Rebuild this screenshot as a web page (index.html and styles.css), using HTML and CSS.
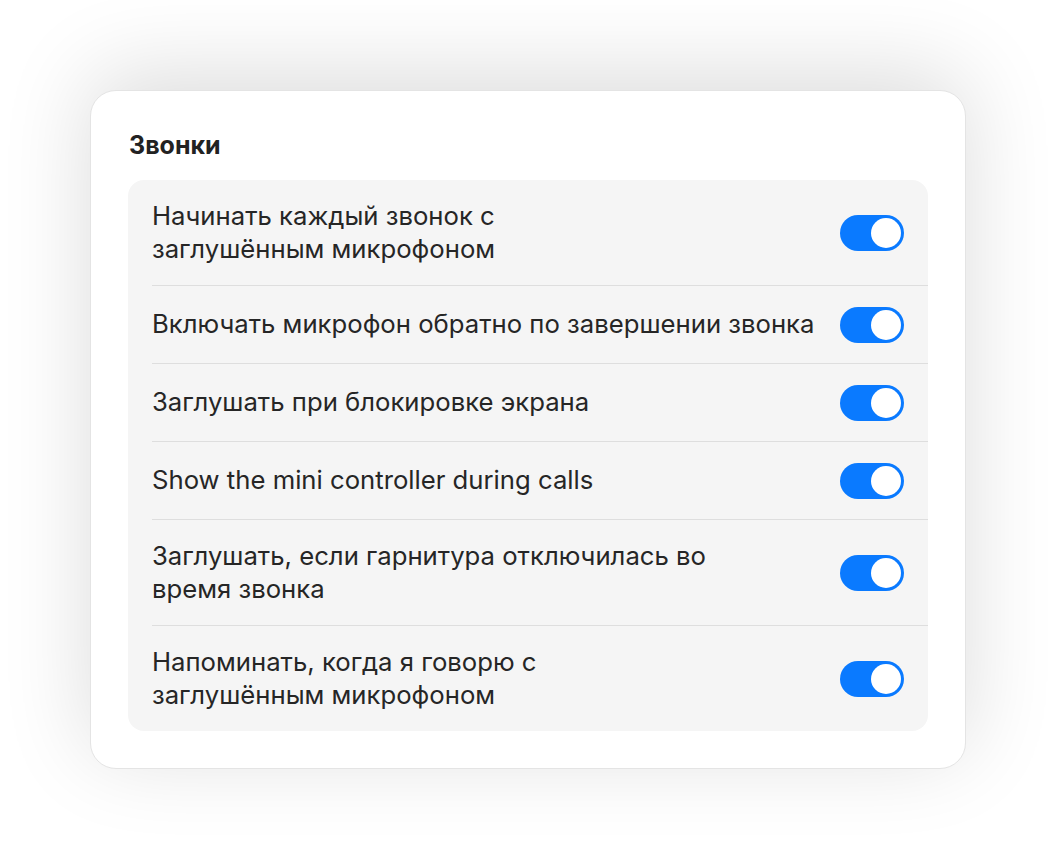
FILE: index.html
```html
<!DOCTYPE html>
<html lang="ru">
<head>
<meta charset="utf-8">
<title>Звонки</title>
<link rel="stylesheet" href="styles.css">
</head>
<body>
<div class="stage">
  <section class="card">
    <h2 class="title">Звонки</h2>
    <div class="list">
      <div class="row">
        <span class="label">Начинать каждый звонок с<br>заглушённым микрофоном</span>
        <span class="toggle"><span class="knob"></span></span>
      </div>
      <div class="row">
        <span class="label">Включать микрофон обратно по завершении звонка</span>
        <span class="toggle"><span class="knob"></span></span>
      </div>
      <div class="row">
        <span class="label">Заглушать при блокировке экрана</span>
        <span class="toggle"><span class="knob"></span></span>
      </div>
      <div class="row">
        <span class="label">Show the mini controller during calls</span>
        <span class="toggle"><span class="knob"></span></span>
      </div>
      <div class="row">
        <span class="label">Заглушать, если гарнитура отключилась во<br>время звонка</span>
        <span class="toggle"><span class="knob"></span></span>
      </div>
      <div class="row">
        <span class="label">Напоминать, когда я говорю с<br>заглушённым микрофоном</span>
        <span class="toggle"><span class="knob"></span></span>
      </div>
    </div>
  </section>
</div>
</body>
</html>
```

FILE: styles.css
```css
html, body {
  margin: 0;
  padding: 0;
  background: #ffffff;
}

body {
  font-family: Inter, "Noto Sans", "DejaVu Sans", sans-serif;
  color: #262626;
  width: 1056px;
  height: 858px;
  overflow: hidden;
}

.stage {
  padding: 90px 0 0 90px;
}

.card {
  box-sizing: border-box;
  width: 876px;
  background: #ffffff;
  border: 1px solid #e4e4e4;
  border-radius: 26px;
  padding: 40px 37px 37px 37px;
  box-shadow: 0 -16px 90px rgba(0, 0, 0, 0.14);
}

.title {
  margin: 0 0 21px 1px;
  font-size: 25px;
  line-height: 28px;
  font-weight: 700;
  color: #222222;
}

.list {
  background: #f5f5f5;
  border-radius: 16px;
  padding-left: 24px;
}

.row {
  box-sizing: border-box;
  display: flex;
  align-items: center;
  justify-content: space-between;
  min-height: 78px;
  padding: 20px 24px 20px 0;
  border-bottom: 1px solid #dedede;
}

.row:last-child {
  border-bottom: none;
  min-height: 77px;
}

.label {
  font-size: 25.7px;
  line-height: 32.5px;
  color: #262626;
}

.toggle {
  flex: none;
  box-sizing: border-box;
  width: 64px;
  height: 36px;
  border-radius: 18px;
  background: #0a7aff;
  display: flex;
  align-items: center;
  justify-content: flex-end;
  padding: 3px;
}

.knob {
  width: 30px;
  height: 30px;
  border-radius: 50%;
  background: #ffffff;
}
```
